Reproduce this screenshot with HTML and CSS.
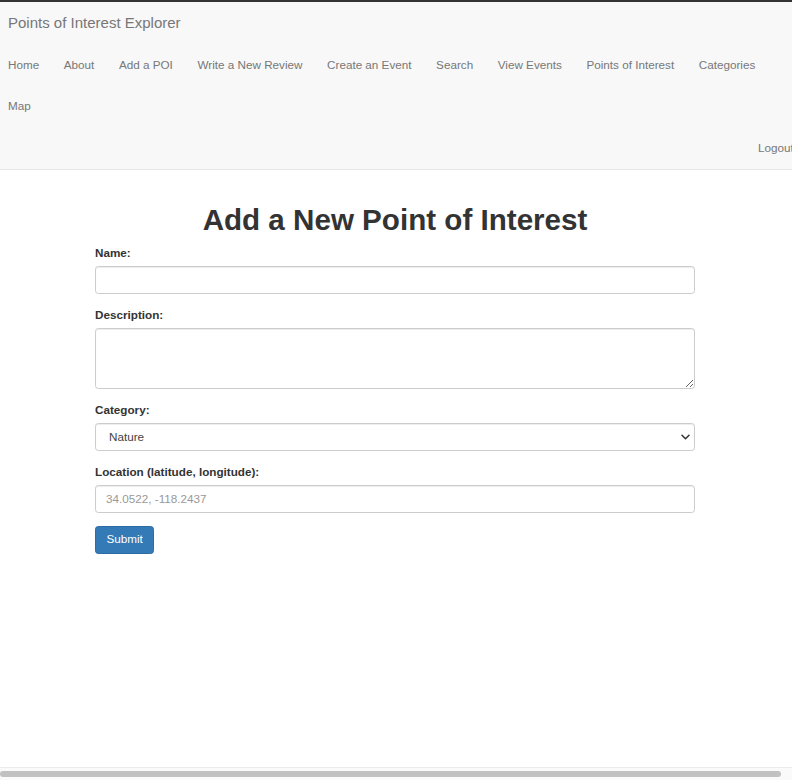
FILE: index.html
```html
<!DOCTYPE html>
<html lang="en">
<head>
<meta charset="utf-8">
<title>Add a POI - Points of Interest Explorer</title>
<link rel="stylesheet" href="styles.css">
</head>
<body>
<div class="page">
  <nav class="navbar">
    <a class="brand" href="#">Points of Interest Explorer</a>
    <ul class="nav">
      <li><a href="#">Home</a></li>
      <li><a href="#">About</a></li>
      <li><a href="#">Add a POI</a></li>
      <li><a href="#">Write a New Review</a></li>
      <li><a href="#">Create an Event</a></li>
      <li><a href="#">Search</a></li>
      <li><a href="#">View Events</a></li>
      <li><a href="#">Points of Interest</a></li>
      <li><a href="#">Categories</a></li>
      <li><a href="#">Map</a></li>
    </ul>
    <ul class="nav nav-right">
      <li><a href="#">Logout</a></li>
    </ul>
  </nav>

  <main class="container">
    <h1 class="title">Add a New Point of Interest</h1>
    <form class="form">
      <div class="form-group">
        <label for="name">Name:</label>
        <input class="control" type="text" id="name">
      </div>
      <div class="form-group">
        <label for="description">Description:</label>
        <textarea class="control textarea" id="description" rows="3"></textarea>
      </div>
      <div class="form-group">
        <label for="category">Category:</label>
        <div class="select-wrap">
          <select class="control select" id="category">
            <option>Nature</option>
          </select>
          <svg class="chevron" width="9" height="6" viewBox="0 0 9 6"><path d="M1 1.2 L4.5 4.7 L8 1.2" fill="none" stroke="#333" stroke-width="1.5" stroke-linecap="round" stroke-linejoin="round"/></svg>
        </div>
      </div>
      <div class="form-group">
        <label for="location">Location (latitude, longitude):</label>
        <input class="control" type="text" id="location" placeholder="34.0522, -118.2437">
      </div>
      <button class="btn" type="button">Submit</button>
    </form>
  </main>

  <div class="scrollbar"><div class="thumb"></div></div>
</div>
</body>
</html>
```

FILE: styles.css
```css
html, body {
  margin: 0;
  padding: 0;
  background: #fff;
}

body {
  font-family: "Liberation Sans", Helvetica, Arial, sans-serif;
  font-size: 11.7px;
  line-height: 16.6px;
  color: #333;
  overflow: hidden;
}

.page {
  border-top: 2px solid #333;
  min-height: 778px;
}

.navbar {
  background: #f8f8f8;
  border-bottom: 1px solid #e7e7e7;
  margin-bottom: 16.6px;
  overflow: hidden;
}

.brand {
  display: block;
  padding: 13.4px 8px 12.5px;
  font-size: 15px;
  line-height: 16.6px;
  color: #777;
  text-decoration: none;
}

.nav {
  display: flex;
  flex-wrap: wrap;
  list-style: none;
  margin: 0 0 0 -4.3px;
  padding: 0;
}

.nav a {
  display: block;
  padding: 12.45px 12.3px;
  font-size: 11.7px;
  line-height: 16.6px;
  color: #777;
  text-decoration: none;
}

.nav-right {
  justify-content: flex-end;
  margin: 0 -14px 0 0;
}

.container {
  display: flow-root;
  width: 602px;
  padding-right: 2px;
  box-sizing: border-box;
  margin: 0 auto;
}

.title {
  font-size: 29.6px;
  line-height: 33px;
  font-weight: bold;
  text-align: center;
  margin: 16.6px 0 9.3px;
  color: #333;
}

.form {
  margin: 0;
}

.form-group {
  margin-bottom: 12.8px;
}

label {
  display: block;
  font-weight: bold;
  margin-bottom: 4.15px;
  line-height: 16.6px;
}

.control {
  display: block;
  width: 100%;
  height: 28.2px;
  box-sizing: border-box;
  padding: 5px 10px;
  font-family: inherit;
  font-size: 11.7px;
  line-height: 16.6px;
  color: #555;
  background: #fff;
  border: 1px solid #ccc;
  border-radius: 3.3px;
  box-shadow: inset 0 1px 1px rgba(0, 0, 0, 0.075);
  margin: 0;
}

.control::placeholder {
  color: #999;
}

.textarea {
  height: 61.5px;
  resize: vertical;
}

.select-wrap {
  position: relative;
}

.select {
  appearance: none;
  -webkit-appearance: none;
  padding-left: 13px;
  color: #444;
}

.chevron {
  position: absolute;
  right: 5px;
  top: 11px;
}

.btn {
  display: inline-block;
  padding: 4.8px 10.4px;
  font-family: inherit;
  font-size: 11.7px;
  line-height: 16.6px;
  color: #fff;
  background: #337ab7;
  border: 1px solid #2e6da4;
  border-radius: 3.3px;
  margin: 0;
}

.scrollbar {
  position: fixed;
  left: 0;
  right: 0;
  bottom: 0;
  height: 12px;
  background: #fafafa;
  border-top: 1px solid #ececec;
}

.thumb {
  width: 781px;
  height: 6px;
  margin-top: 3px;
  background: #c1c1c1;
  border-radius: 3px;
}
```
